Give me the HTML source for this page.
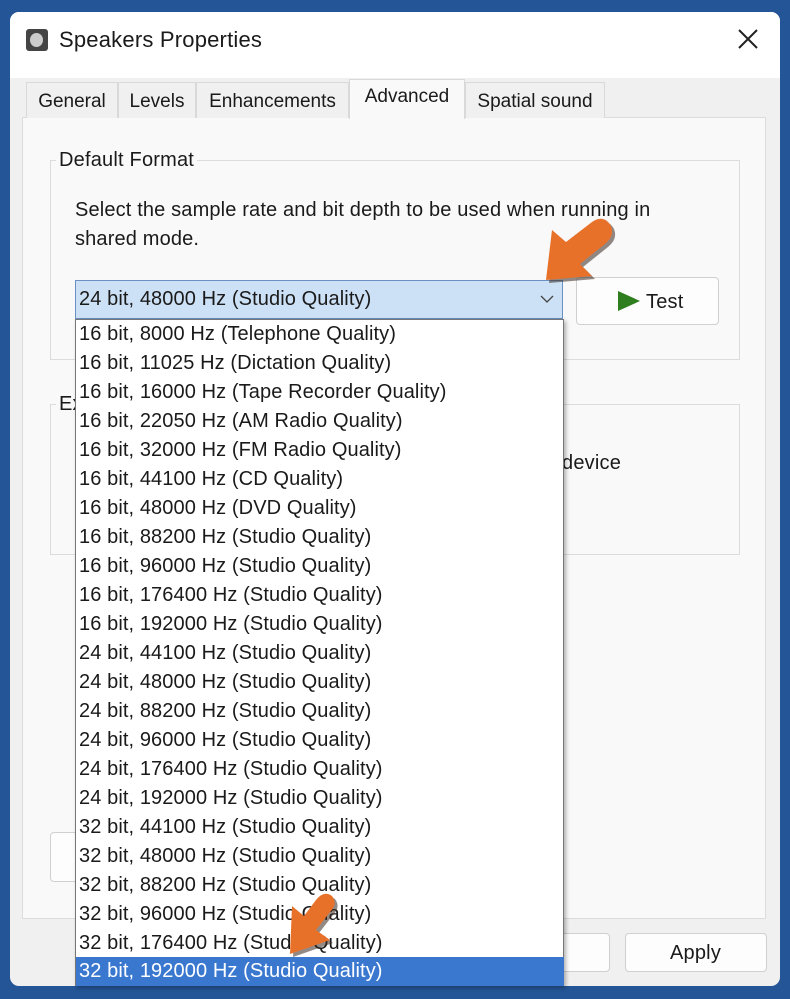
<!DOCTYPE html>
<html><head><style>
*{margin:0;padding:0;box-sizing:border-box}
body{width:790px;height:999px;background:#245596;font-family:"Liberation Sans",sans-serif;color:#1a1a1a;position:relative;overflow:hidden}
.a{position:absolute}
.win{left:10px;top:12px;width:770px;height:974px;background:#f0f0f0;border-radius:9px;overflow:hidden}
.title{left:0;top:0;width:770px;height:66px;background:#fff}
.t{font-size:20px;white-space:nowrap;letter-spacing:0.2px}
.tab{top:82px;height:36px;background:#f0f0f0;border:1px solid #d9d9d9;border-bottom:none;font-size:19px;padding:8px 0 0 0;text-align:center}
.btn{background:#fdfdfd;border:1px solid #d0d0d0;border-radius:4px}
.row{position:absolute;left:0;width:488px;height:29px;font-size:20px;padding:3px 0 0 3px;white-space:nowrap;letter-spacing:0.1px}
</style></head><body>
<div class="a win">
  <div class="a title"></div>
</div>
<div class="a" style="left:26px;top:29px;width:22px;height:22px;background:#444;border-radius:3px"></div>
<div class="a" style="left:30px;top:33px;width:13px;height:14px;background:#ccc;border-radius:50%"></div>
<div class="a t" style="left:59px;top:27px;font-size:22px">Speakers Properties</div>
<svg class="a" style="left:737px;top:28px" width="22" height="22"><path d="M2 2L20 20M20 2L2 20" stroke="#222" stroke-width="2"/></svg>
<div class="a" style="left:22px;top:117px;width:744px;height:802px;background:#f9f9f9;border:1px solid #dcdcdc"></div>
<div class="a tab" style="left:26px;width:92px">General</div>
<div class="a tab" style="left:118px;width:78px">Levels</div>
<div class="a tab" style="left:196px;width:153px">Enhancements</div>
<div class="a tab" style="left:349px;top:79px;height:40px;width:116px;background:#f9f9f9;padding-top:6px">Advanced</div>
<div class="a tab" style="left:465px;width:140px">Spatial sound</div>
<div class="a" style="left:50px;top:160px;width:690px;height:200px;border:1px solid #dcdcdc"></div>
<div class="a t" style="left:56px;top:149px;background:#f9f9f9;padding:0 3px">Default Format</div>
<div class="a t" style="left:75px;top:196px;line-height:29px;letter-spacing:0.15px">Select the sample rate and bit depth to be used when running in<br>shared mode.</div>
<div class="a" style="left:50px;top:404px;width:690px;height:151px;border:1px solid #dcdcdc"></div>
<div class="a t" style="left:56px;top:393px;background:#f9f9f9;padding:0 3px">Ex</div>
<div class="a t" style="left:562px;top:452px">device</div>
<div class="a btn" style="left:50px;top:832px;width:40px;height:50px"></div>
<div class="a btn" style="left:576px;top:277px;width:143px;height:48px"></div>
<svg class="a" style="left:617px;top:290px" width="24" height="22"><path d="M1 1L23 11L1 21Z" fill="#2e7d1e"/></svg>
<div class="a t" style="left:646px;top:291px">Test</div>
<div class="a btn" style="left:480px;top:933px;width:130px;height:39px"></div>
<div class="a t" style="left:560px;top:942px">l</div>
<div class="a btn" style="left:625px;top:933px;width:142px;height:39px"></div>
<div class="a t" style="left:670px;top:942px">Apply</div>
<div class="a" style="left:75px;top:280px;width:488px;height:39px;background:#cde1f6;border:1px solid #6b91c4"></div>
<div class="a t" style="left:79px;top:288px;letter-spacing:0.1px">24 bit, 48000 Hz (Studio Quality)</div>
<svg class="a" style="left:540px;top:294px" width="14" height="10"><path d="M1 2L7 8L13 2" stroke="#444" fill="none" stroke-width="1.3"/></svg>
<div class="a" style="left:75px;top:319px;width:489px;height:667px;background:#fff;border:1px solid #777;box-shadow:2px 2px 4px rgba(0,0,0,.3)">
<div class="row" style="top:0">16 bit, 8000 Hz (Telephone Quality)</div>
<div class="row" style="top:29px">16 bit, 11025 Hz (Dictation Quality)</div>
<div class="row" style="top:58px">16 bit, 16000 Hz (Tape Recorder Quality)</div>
<div class="row" style="top:87px">16 bit, 22050 Hz (AM Radio Quality)</div>
<div class="row" style="top:116px">16 bit, 32000 Hz (FM Radio Quality)</div>
<div class="row" style="top:145px">16 bit, 44100 Hz (CD Quality)</div>
<div class="row" style="top:174px">16 bit, 48000 Hz (DVD Quality)</div>
<div class="row" style="top:203px">16 bit, 88200 Hz (Studio Quality)</div>
<div class="row" style="top:232px">16 bit, 96000 Hz (Studio Quality)</div>
<div class="row" style="top:261px">16 bit, 176400 Hz (Studio Quality)</div>
<div class="row" style="top:290px">16 bit, 192000 Hz (Studio Quality)</div>
<div class="row" style="top:319px">24 bit, 44100 Hz (Studio Quality)</div>
<div class="row" style="top:348px">24 bit, 48000 Hz (Studio Quality)</div>
<div class="row" style="top:377px">24 bit, 88200 Hz (Studio Quality)</div>
<div class="row" style="top:406px">24 bit, 96000 Hz (Studio Quality)</div>
<div class="row" style="top:435px">24 bit, 176400 Hz (Studio Quality)</div>
<div class="row" style="top:464px">24 bit, 192000 Hz (Studio Quality)</div>
<div class="row" style="top:493px">32 bit, 44100 Hz (Studio Quality)</div>
<div class="row" style="top:522px">32 bit, 48000 Hz (Studio Quality)</div>
<div class="row" style="top:551px">32 bit, 88200 Hz (Studio Quality)</div>
<div class="row" style="top:580px">32 bit, 96000 Hz (Studio Quality)</div>
<div class="row" style="top:609px">32 bit, 176400 Hz (Studio Quality)</div>
<div class="row" style="top:637px;background:#3a78d0;color:#fff">32 bit, 192000 Hz (Studio Quality)</div>
</div>
<svg class="a" style="left:0;top:0" width="790" height="999">
<g transform="translate(3,3)" fill="#3a2a20" opacity=".55">
<path d="M546 280L552 230L566 242L592 222Q604 214 611 226Q615 236 605 244L580 264L592 276Z"/>
<path d="M290 954L292 906L304 916L316 900Q324 890 332 896Q338 904 330 912L316 930L330 940Z"/>
</g>
<g fill="#e8712a">
<path d="M546 280L552 230L566 242L592 222Q604 214 611 226Q615 236 605 244L580 264L592 276Z"/>
<path d="M290 954L292 906L304 916L316 900Q324 890 332 896Q338 904 330 912L316 930L330 940Z"/>
</g>
</svg>
</body></html>
